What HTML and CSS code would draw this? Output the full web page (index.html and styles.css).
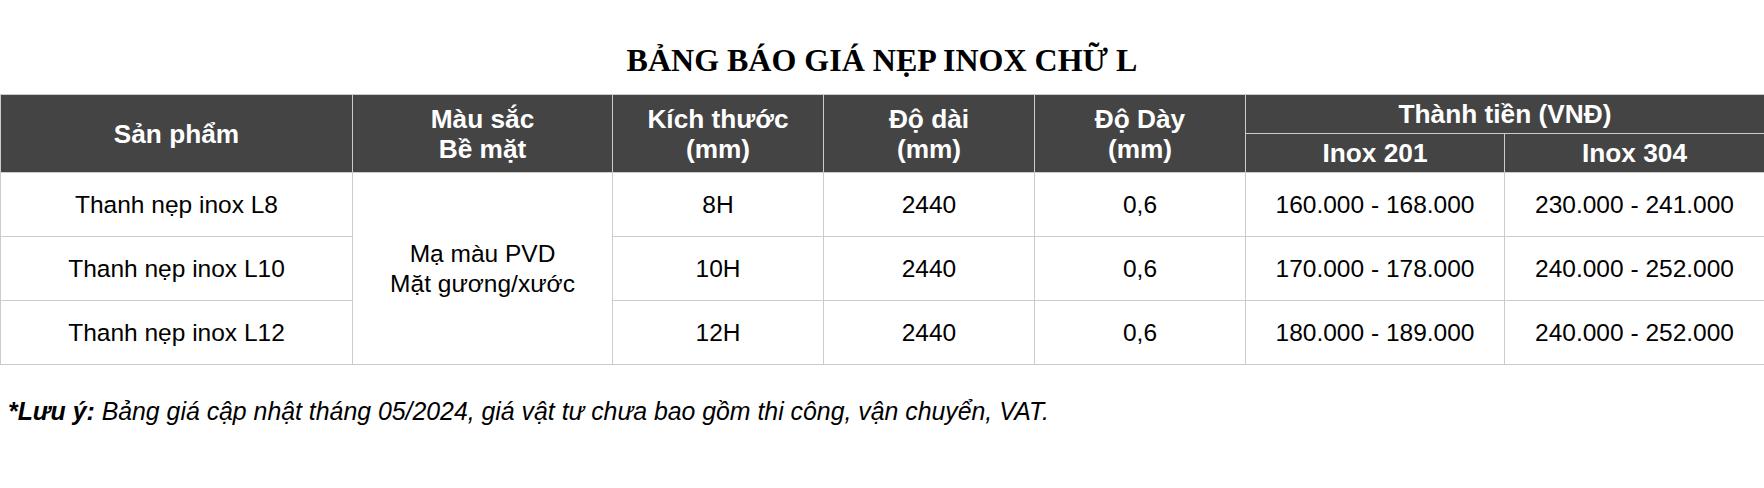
FILE: index.html
```html
<!DOCTYPE html>
<html lang="vi">
<head>
<meta charset="utf-8">
<title>Bảng báo giá nẹp inox chữ L</title>
<link rel="stylesheet" href="styles.css">
</head>
<body>
<h2 class="title">BẢNG BÁO GIÁ NẸP INOX CHỮ L</h2>
<table class="price">
  <colgroup>
    <col class="c1"><col class="c2"><col class="c3"><col class="c4"><col class="c5"><col class="c6"><col class="c7">
  </colgroup>
  <thead>
    <tr class="h1">
      <th rowspan="2">Sản phẩm</th>
      <th rowspan="2">Màu sắc<br>Bề mặt</th>
      <th rowspan="2">Kích thước<br>(mm)</th>
      <th rowspan="2">Độ dài<br>(mm)</th>
      <th rowspan="2">Độ Dày<br>(mm)</th>
      <th colspan="2">Thành tiền (VNĐ)</th>
    </tr>
    <tr class="h2">
      <th>Inox 201</th>
      <th>Inox 304</th>
    </tr>
  </thead>
  <tbody>
    <tr>
      <td>Thanh nẹp inox L8</td>
      <td rowspan="3">Mạ màu PVD<br>Mặt gương/xước</td>
      <td>8H</td>
      <td>2440</td>
      <td>0,6</td>
      <td>160.000 - 168.000</td>
      <td>230.000 - 241.000</td>
    </tr>
    <tr>
      <td>Thanh nẹp inox L10</td>
      <td>10H</td>
      <td>2440</td>
      <td>0,6</td>
      <td>170.000 - 178.000</td>
      <td>240.000 - 252.000</td>
    </tr>
    <tr>
      <td>Thanh nẹp inox L12</td>
      <td>12H</td>
      <td>2440</td>
      <td>0,6</td>
      <td>180.000 - 189.000</td>
      <td>240.000 - 252.000</td>
    </tr>
  </tbody>
</table>
<p class="note"><strong>*Lưu ý:</strong> Bảng giá cập nhật tháng 05/2024, giá vật tư chưa bao gồm thi công, vận chuyển, VAT.</p>
</body>
</html>
```
FILE: styles.css
```css
html, body {
  margin: 0;
  padding: 0;
  background: #fff;
}
body {
  font-family: "Liberation Sans", Arial, sans-serif;
  color: #000;
}
.title {
  margin: 0;
  box-sizing: border-box;
  height: 94px;
  padding-top: 40px;
  font-family: "Liberation Serif", "Times New Roman", serif;
  font-weight: bold;
  font-size: 32px;
  line-height: 40px;
  text-align: center;
}
.price {
  width: 1764px;
  table-layout: fixed;
  border-collapse: collapse;
}
.c1 { width: 352px; }
.c2 { width: 260px; }
.c3 { width: 211px; }
.c4 { width: 211px; }
.c5 { width: 211px; }
.c6 { width: 259px; }
.c7 { width: 260px; }
.price th,
.price td {
  border: 1px solid #cccccc;
  text-align: center;
  vertical-align: middle;
  padding: 0 4px;
}
.price th {
  background: #444444;
  color: #fff;
  font-weight: bold;
  font-size: 26.25px;
  line-height: 30px;
}
.price .h1,
.price .h2 {
  height: 39px;
}
.price td {
  font-size: 24.5px;
  line-height: 30px;
  height: 63px;
}
.note {
  margin: 0;
  padding: 32px 0 0 8px;
  font-style: italic;
  font-size: 24.85px;
  line-height: 30px;
}
.note strong {
  font-weight: bold;
}
```
